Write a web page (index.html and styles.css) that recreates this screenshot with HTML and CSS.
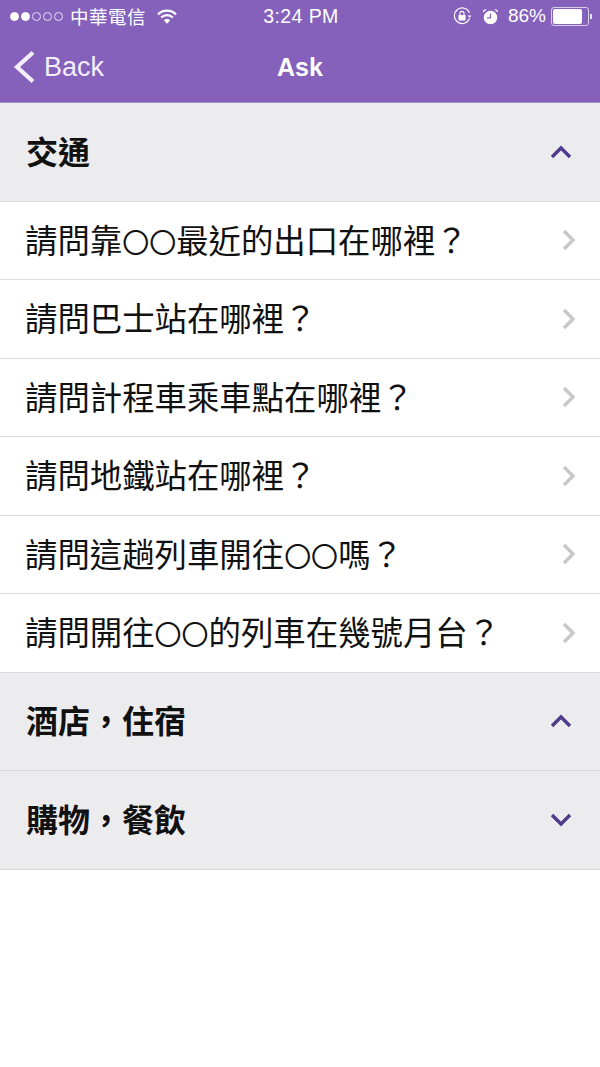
FILE: index.html
```html
<!DOCTYPE html>
<html lang="zh-Hant">
<head>
    <meta charset="UTF-8">
    <meta name="viewport" content="width=device-width, initial-scale=1.0">
    <title>Ask</title>
    <link rel="stylesheet" href="styles.css">
</head>
<body>
    <header class="top-bar">
        <div class="status-bar">
            <div class="status-left">
                <span class="signal">
                    <i class="dot on"></i><i class="dot on"></i><i class="dot"></i><i class="dot"></i><i class="dot"></i>
                </span>
                <span class="carrier">中華電信</span>
                <svg class="wifi" width="20" height="15" viewBox="0 0 20 15">
                    <path d="M1 5.4a12.5 12.5 0 0 1 18 0" fill="none" stroke="#fff" stroke-width="2.2"/>
                    <path d="M4.2 8.6a8 8 0 0 1 11.6 0" fill="none" stroke="#fff" stroke-width="2.2"/>
                    <path d="M10 14.8l-3.2-3.6a4.6 4.6 0 0 1 6.4 0z" fill="#fff"/>
                </svg>
            </div>
            <div class="status-time">3:24 PM</div>
            <div class="status-right">
                <svg class="lock" width="19" height="18" viewBox="0 0 19 18">
                    <path d="M16.5 11.5A7.8 7.8 0 1 1 16.5 6" fill="none" stroke="#fff" stroke-width="1.1"/>
                    <path d="M14.8 8.5h3.6l-1.8 2.4z" fill="#fff"/>
                    <rect x="5.5" y="8" width="7" height="5.4" rx="0.6" fill="#fff"/>
                    <path d="M7 8V6.4a2 2 0 0 1 4 0V8" fill="none" stroke="#fff" stroke-width="1.1"/>
                </svg>
                <svg class="alarm" width="17" height="17" viewBox="0 0 17 17">
                    <circle cx="8.5" cy="9.5" r="6.8" fill="#fff"/>
                    <path d="M0.8 4.4a3 3 0 0 1 4-3zM16.2 4.4a3 3 0 0 0-4-3z" fill="#fff"/>
                    <path d="M8.5 5.5v4.3H5" fill="none" stroke="#8561bc" stroke-width="1.2"/>
                </svg>
                <span class="battery-text">86%</span>
                <span class="battery"><span class="battery-fill"></span></span>
                <span class="battery-tip"></span>
            </div>
        </div>
        <nav class="nav-bar">
            <a class="back">
                <svg width="22" height="34" viewBox="0 0 22 34">
                    <path d="M20 2.5L4 17L20 31.5" fill="none" stroke="#f3eefa" stroke-width="4.2"/>
                </svg>
                <span>Back</span>
            </a>
            <div class="nav-title">Ask</div>
        </nav>
    </header>

    <main>
        <div class="section">
            <span>交通</span>
            <svg class="toggle" width="22" height="14" viewBox="0 0 22 14"><path d="M2 12L11 3l9 9" /></svg>
        </div>
        <div class="row"><span>請問靠<b class="blank">〇〇</b>最近的出口在哪裡？</span><svg class="more" width="14" height="22" viewBox="0 0 14 22"><path d="M2 2l9 9-9 9"/></svg></div>
        <div class="row"><span>請問巴士站在哪裡？</span><svg class="more" width="14" height="22" viewBox="0 0 14 22"><path d="M2 2l9 9-9 9"/></svg></div>
        <div class="row"><span>請問計程車乘車點在哪裡？</span><svg class="more" width="14" height="22" viewBox="0 0 14 22"><path d="M2 2l9 9-9 9"/></svg></div>
        <div class="row"><span>請問地鐵站在哪裡？</span><svg class="more" width="14" height="22" viewBox="0 0 14 22"><path d="M2 2l9 9-9 9"/></svg></div>
        <div class="row"><span>請問這趟列車開往<b class="blank">〇〇</b>嗎？</span><svg class="more" width="14" height="22" viewBox="0 0 14 22"><path d="M2 2l9 9-9 9"/></svg></div>
        <div class="row"><span>請問開往<b class="blank">〇〇</b>的列車在幾號月台？</span><svg class="more" width="14" height="22" viewBox="0 0 14 22"><path d="M2 2l9 9-9 9"/></svg></div>
        <div class="section">
            <span>酒店，住宿</span>
            <svg class="toggle" width="22" height="14" viewBox="0 0 22 14"><path d="M2 12L11 3l9 9" /></svg>
        </div>
        <div class="section">
            <span>購物，餐飲</span>
            <svg class="toggle" width="22" height="14" viewBox="0 0 22 14"><path d="M2 2l9 9 9-9" /></svg>
        </div>
    </main>
</body>
</html>
```

FILE: styles.css
```css
body {
    margin: 0;
    background-color: #fff;
    font-family: "Noto Sans CJK TC", "Liberation Sans", sans-serif;
    color: #111;
}
.top-bar {
    height: 102px;
    background-color: #8561bc;
    color: #fff;
    border-bottom: 1px solid #a08dc0;
}
.status-bar {
    display: grid;
    grid-template-columns: 1fr auto 1fr;
    align-items: center;
    height: 32px;
    padding: 0 8px 0 10px;
}
.status-left, .status-right {
    display: flex;
    align-items: center;
}
.status-right {
    justify-content: flex-end;
}
.signal {
    display: flex;
    gap: 2px;
}
.dot {
    width: 7px;
    height: 7px;
    border: 1px solid #e8e0f5;
    border-radius: 50%;
}
.dot.on {
    background-color: #fff;
    border-color: #fff;
}
.carrier {
    margin-left: 7px;
    font-size: 18.5px;
    letter-spacing: 0.5px;
    line-height: 32px;
}
.wifi {
    margin-left: 11px;
}
.status-time {
    font-family: "Liberation Sans", sans-serif;
    font-size: 19.5px;
    letter-spacing: 0.4px;
}
.lock {
    margin-right: 10px;
}
.alarm {
    margin-right: 9px;
}
.battery-text {
    font-family: "Liberation Sans", sans-serif;
    font-size: 19px;
    margin-right: 5px;
}
.battery {
    width: 34px;
    height: 15px;
    padding: 1px;
    border: 1px solid #d9cfe9;
    border-radius: 3px;
}
.battery-fill {
    display: block;
    width: 29px;
    height: 15px;
    background-color: #fff;
    border-radius: 2px;
}
.battery-tip {
    width: 2px;
    height: 5px;
    margin-left: 1px;
    background-color: #e8e0f5;
}
.nav-bar {
    display: grid;
    grid-template-columns: 1fr auto 1fr;
    align-items: center;
    height: 70px;
    padding-left: 13px;
    padding-right: 13px;
}
.back {
    display: flex;
    align-items: center;
    gap: 9px;
    color: #f3eefa;
    font-family: "Liberation Sans", sans-serif;
    font-size: 27px;
}
.nav-title {
    font-family: "Liberation Sans", sans-serif;
    font-size: 25px;
    font-weight: bold;
}
.section {
    display: flex;
    align-items: center;
    justify-content: space-between;
    height: 97.5px;
    padding: 0 28px 0 26px;
    background-color: #ececee;
    border-bottom: 1px solid #d8d8d8;
    font-size: 32px;
    font-weight: bold;
}
.section span, .row span {
    margin-bottom: 4px;
}
.row {
    display: flex;
    align-items: center;
    justify-content: space-between;
    height: 77.5px;
    padding: 0 24px 0 25px;
    border-bottom: 1px solid #dcdcdc;
    font-size: 32.4px;
}
.blank {
    font-size: 27px;
    font-weight: normal;
}
.toggle path {
    fill: none;
    stroke: #4f3a8c;
    stroke-width: 3.4;
}
.more path {
    fill: none;
    stroke: #c8c8c8;
    stroke-width: 3.4;
}
```
